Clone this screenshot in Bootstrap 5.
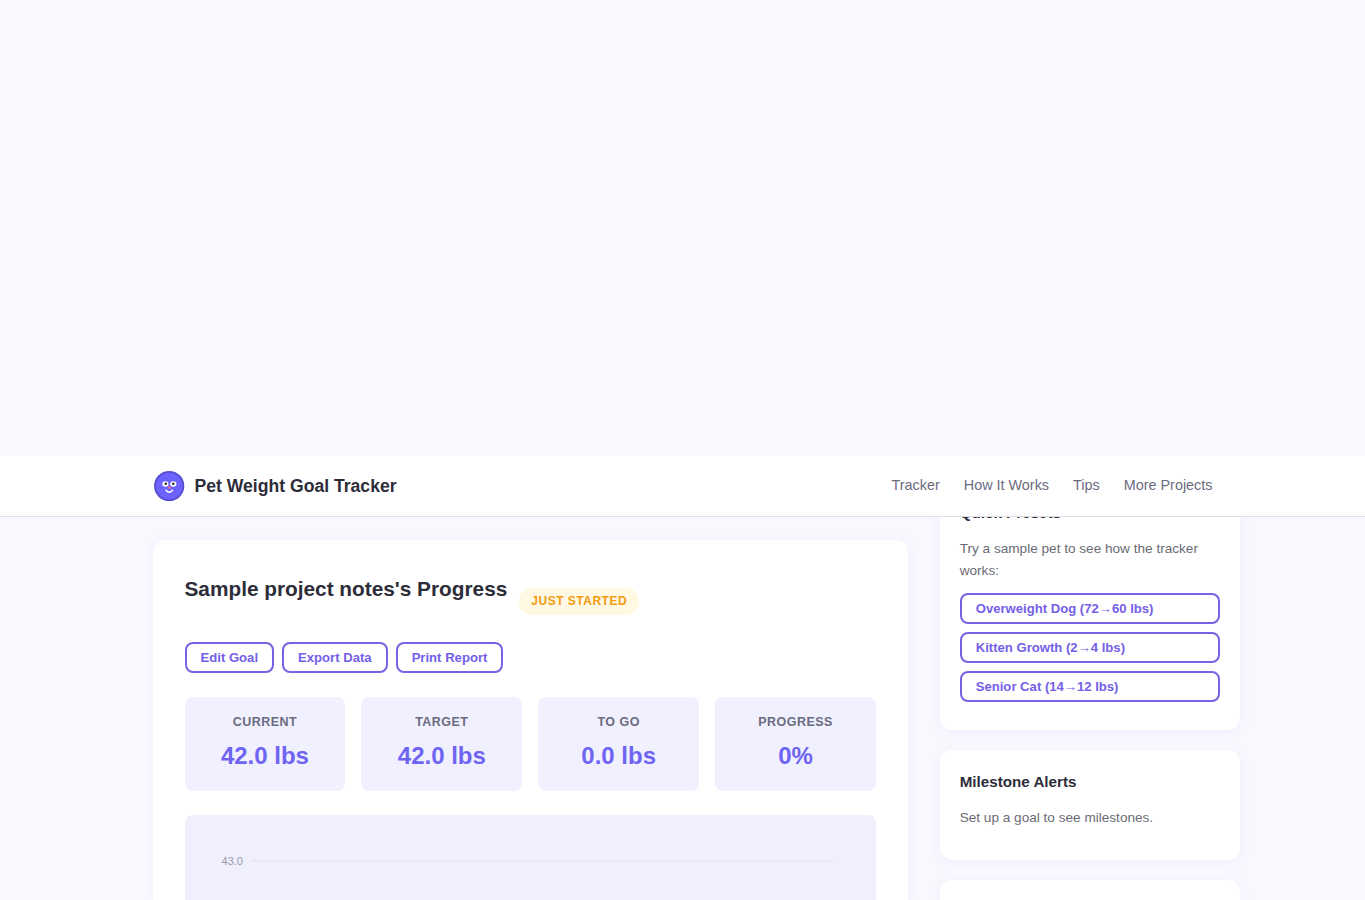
<!DOCTYPE html>
<html lang="en">
<head>
<meta charset="utf-8">
<meta name="viewport" content="width=device-width, initial-scale=1">
<title>Pet Weight Goal Tracker</title>
<link href="https://cdn.jsdelivr.net/npm/bootstrap@5.3.0/dist/css/bootstrap.min.css" rel="stylesheet">
<style>
body{font-family:"Liberation Sans",Arial,sans-serif;font-size:16px;line-height:1.6;color:#2d2d3a;background:#f8f9fe;height:900px;overflow:hidden}
.page-gap{height:456px}
.site-head{height:61px;background:#fff;border-bottom:1px solid #dfe0e6;z-index:10}
.head-inner{width:1060px}
.brand-name{font-size:17.6px;color:#2d2d3a}
.site-head .nav-link{font-size:14.4px;color:#6b6b80;padding:0}
.layout{width:1087.5px;height:383px;overflow:visible;margin-left:152.5px;gap:31.7px}
.panel{background:#fff;border-radius:12px;box-shadow:0 2px 12px rgba(108,99,255,.08)}
.tracker{width:755.5px;height:360px;margin-top:23px;padding:32px 32px 0;border-bottom-left-radius:0;border-bottom-right-radius:0}
.tracker h2{font-size:20.8px;line-height:33px}
.status-pill{font-size:12px;letter-spacing:.5px;line-height:19px;padding:4px 12px;border-radius:20px;background:#fff8e3;box-shadow:0 0 2px #fffaeb;color:#f39c12;margin:16px 0 0 12px}
.title-row{height:54px}
.btn-line{--bs-btn-font-size:13.12px;--bs-btn-font-weight:700;--bs-btn-color:#7460e6;--bs-btn-border-color:#7662e2;--bs-btn-border-width:2px;--bs-btn-border-radius:8px;--bs-btn-padding-x:14px;--bs-btn-padding-y:0;--bs-btn-hover-color:#fff;--bs-btn-hover-bg:#6c63ff;height:31px;line-height:27px}
.stats{display:grid;grid-template-columns:repeat(4,1fr);gap:16px;margin-top:24px}
.stat{height:94px;background:#f0f0fe;border-radius:8px;padding-top:15px}
.stat-label{font-size:12.48px;letter-spacing:.5px;line-height:21px;color:#6b6b80}
.stat-value{font-size:24px;line-height:38px;color:#6f64f2;margin-top:4px}
.chart-box{height:85px;margin-top:24px;background:#f0effd;border-radius:8px 8px 0 0}
.side{width:300.3px;margin-top:-35.7px;gap:20px}
.side .panel{padding:20px}
.side h3{font-size:15.2px;line-height:24.3px;margin-bottom:12.6px}
.side p{font-size:13.6px;line-height:21.76px;color:#6b6b76;margin-bottom:11.4px}
.side .next-panel{height:20px;padding:0;border-radius:12px 12px 0 0}
</style>
</head>
<body>
<div class="page-gap"></div>
<header class="site-head position-relative">
  <div class="head-inner h-100 mx-auto d-flex align-items-center justify-content-between">
    <a class="d-flex align-items-center text-decoration-none gap-2" href="#">
      <svg width="34" height="32" viewBox="0 0 34 32" aria-hidden="true">
        <circle cx="16.2" cy="16" r="14.2" fill="#6c63ff" stroke="#574bd0" stroke-width="1.8"/>
        <ellipse cx="12.4" cy="14" rx="3.1" ry="2.8" fill="#fff"/><ellipse cx="20.3" cy="14" rx="3.1" ry="2.8" fill="#fff"/>
        <circle cx="12.8" cy="13.8" r="1.3" fill="#2d2d3a"/><circle cx="20.3" cy="13.8" r="1.3" fill="#2d2d3a"/>
        <ellipse cx="16.4" cy="17.6" rx="1.6" ry="1.3" fill="#e46a9c"/>
        <path d="M13.1 20.2q3.2 3.9 6.4 0" fill="none" stroke="#fff" stroke-width="1.5" stroke-linecap="round"/>
      </svg>
      <span class="brand-name fw-bold">Pet Weight Goal Tracker</span>
    </a>
    <nav class="nav gap-4">
      <a class="nav-link" href="#">Tracker</a><a class="nav-link" href="#">How It Works</a><a class="nav-link" href="#">Tips</a><a class="nav-link" href="#">More Projects</a>
    </nav>
  </div>
</header>
<main class="layout d-flex align-items-start">
  <section class="panel tracker">
    <div class="title-row d-flex align-items-start">
      <h2 class="fw-bold mb-0">Sample project notes's Progress</h2>
      <span class="status-pill fw-bold">JUST STARTED</span>
    </div>
    <div class="d-flex gap-2 mt-3">
      <button class="btn btn-line">Edit Goal</button><button class="btn btn-line">Export Data</button><button class="btn btn-line">Print Report</button>
    </div>
    <div class="stats text-center fw-bold">
      <div class="stat"><div class="stat-label">CURRENT</div><div class="stat-value">42.0 lbs</div></div>
      <div class="stat"><div class="stat-label">TARGET</div><div class="stat-value">42.0 lbs</div></div>
      <div class="stat"><div class="stat-label">TO GO</div><div class="stat-value">0.0 lbs</div></div>
      <div class="stat"><div class="stat-label">PROGRESS</div><div class="stat-value">0%</div></div>
    </div>
    <div class="chart-box">
      <svg class="d-block" width="691" height="85" aria-hidden="true">
        <text x="58" y="50" text-anchor="end" font-size="11" fill="#9999aa">43.0</text>
        <path d="M67 46H648" stroke="#e5e4f4" stroke-width="1.5"/>
      </svg>
    </div>
  </section>
  <aside class="side d-flex flex-column">
    <section class="panel">
      <h3 class="fw-bold">Quick Presets</h3>
      <p>Try a sample pet to see how the tracker works:</p>
      <div class="d-grid gap-2 mb-2">
        <button class="btn btn-line text-start">Overweight Dog (72→60 lbs)</button>
        <button class="btn btn-line text-start">Kitten Growth (2→4 lbs)</button>
        <button class="btn btn-line text-start">Senior Cat (14→12 lbs)</button>
      </div>
    </section>
    <section class="panel">
      <h3 class="fw-bold">Milestone Alerts</h3>
      <p>Set up a goal to see milestones.</p>
    </section>
    <section class="panel next-panel"></section>
  </aside>
</main>
<script src="https://cdn.jsdelivr.net/npm/bootstrap@5.3.0/dist/js/bootstrap.bundle.min.js"></script>
</body>
</html>
